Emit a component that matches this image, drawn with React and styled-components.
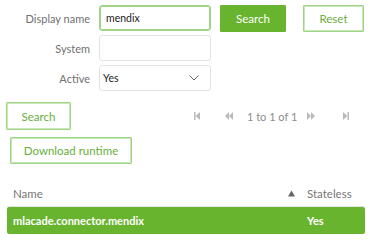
import React from "react";
import styled, { createGlobalStyle } from "styled-components";

const Global = createGlobalStyle`
  html, body { margin: 0; padding: 0; background: #fff; }
  body { font-family: Lato, "Open Sans", sans-serif; font-size: 11px; color: #555; }
  * { box-sizing: border-box; }
`;

const GREEN = "#68b42e";
const LIGHT_GREEN = "#9fd484";

const Page = styled.div`
  width: 370px;
  height: 242px;
  padding-top: 5px;
  display: flex;
  flex-direction: column;
  overflow: hidden;
`;

const Form = styled.div`
  display: grid;
  grid-template-columns: 90px 112px auto auto;
  grid-auto-rows: 26px;
  column-gap: 9px;
  row-gap: 4px;
  align-items: center;
`;

const Label = styled.label`
  text-align: right;
  color: #707070;
  font-size: 11px;
`;

const Input = styled.input`
  width: 112px;
  height: 26px;
  border: 1px solid ${(p) => (p.$focus ? LIGHT_GREEN : "#e2e2e2")};
  box-shadow: ${(p) => (p.$focus ? `inset 0 0 0 1px ${LIGHT_GREEN}` : "none")};
  border-radius: 3px;
  padding: 0 6px;
  font-family: inherit;
  font-size: 10.5px;
  color: #222;
  outline: none;
`;

const SelectBox = styled.div`
  width: 112px;
  height: 26px;
  border: 1px solid #e2e2e2;
  border-radius: 3px;
  padding: 0 11px 0 3px;
  display: flex;
  align-items: center;
  justify-content: space-between;
  font-size: 10.5px;
  color: #222;
`;

const Button = styled.button`
  height: ${(p) => p.$h || 27}px;
  width: ${(p) => p.$w}px;
  font-family: inherit;
  font-size: 11.5px;
  border-radius: 1px;
  border: 1px solid ${(p) => (p.$primary ? GREEN : LIGHT_GREEN)};
  background: ${(p) => (p.$primary ? GREEN : "#fff")};
  color: ${(p) => (p.$primary ? "#fff" : "#6aae3c")};
  box-shadow: ${(p) => (p.$primary ? "none" : `inset 0 0 0 1px #c9e8b8`)};
  padding: 0;
  cursor: pointer;
  margin-left: ${(p) => p.$ml || 0}px;
`;

const ToolRow = styled.div`
  display: flex;
  align-items: center;
  margin-top: 11px;
  padding-left: 6px;
`;

const Pager = styled.div`
  display: flex;
  align-items: center;
  margin-left: 122px;
  color: #8c8c8c;
  font-size: 11px;
`;

const PagerIcon = styled.span`
  display: inline-flex;
  width: 8px;
  justify-content: center;
  margin-right: ${(p) => p.$mr}px;
  margin-left: ${(p) => p.$ml || 0}px;
`;

const DownloadRow = styled.div`
  padding-left: 10px;
  margin-top: 7px;
`;

const Table = styled.div`
  margin: 16px 5px 0 7px;
`;

const HeadRow = styled.div`
  display: grid;
  grid-template-columns: 1fr 64px;
  height: 27px;
  align-items: center;
  border-bottom: 1px solid #e6e6e6;
  color: #777;
  font-size: 11.5px;
`;

const HeadCell = styled.div`
  padding-left: 6px;
  display: flex;
  align-items: center;
  justify-content: space-between;
`;

const SortIcon = styled.span`
  display: inline-flex;
  margin-right: 6px;
`;

const DataRow = styled.div`
  display: grid;
  grid-template-columns: 1fr 64px;
  height: 27px;
  align-items: center;
  background: ${GREEN};
  color: #fff;
  font-weight: 700;
  font-size: 11px;
  border-radius: 2px;
`;

const Cell = styled.div`
  padding-left: 6px;
`;

const First = () => (
  <svg width="6" height="8" viewBox="0 0 6 8"><rect x="0" y="0" width="1.5" height="8" fill="#bbb" /><path d="M6 0 L1.5 4 L6 8 Z" fill="#bbb" /></svg>
);
const Prev = () => (
  <svg width="8" height="8" viewBox="0 0 8 8"><path d="M4 0 L0 4 L4 8 Z M8 0 L4 4 L8 8 Z" fill="#bbb" /></svg>
);
const Next = () => (
  <svg width="8" height="8" viewBox="0 0 8 8"><path d="M0 0 L4 4 L0 8 Z M4 0 L8 4 L4 8 Z" fill="#bbb" /></svg>
);
const Last = () => (
  <svg width="6" height="8" viewBox="0 0 6 8"><path d="M0 0 L4.5 4 L0 8 Z" fill="#bbb" /><rect x="4.5" y="0" width="1.5" height="8" fill="#bbb" /></svg>
);
const Chevron = () => (
  <svg width="10" height="6" viewBox="0 0 10 6"><path d="M0.5 0.5 L5 5 L9.5 0.5" stroke="#666" strokeWidth="1" fill="none" /></svg>
);
const Triangle = () => (
  <svg width="7" height="7" viewBox="0 0 7 7"><path d="M3.5 0.5 L7 6.5 L0 6.5 Z" fill="#666" /></svg>
);

export default function App() {
  return (
    <Page>
      <Global />
      <Form>
        <Label>Display name</Label>
        <Input $focus defaultValue="mendix" />
        <Button $primary $w={66}>Search</Button>
        <Button $w={61} $ml={2}>Reset</Button>
        <Label>System</Label>
        <Input />
        <span />
        <span />
        <Label>Active</Label>
        <SelectBox>
          <span>Yes</span>
          <Chevron />
        </SelectBox>
      </Form>
      <ToolRow>
        <Button $w={65} $h={28}>Search</Button>
        <Pager>
          <PagerIcon $mr={24}><First /></PagerIcon>
          <PagerIcon $mr={14}><Prev /></PagerIcon>
          <span>1 to 1 of 1</span>
          <PagerIcon $mr={27} $ml={10}><Next /></PagerIcon>
          <PagerIcon $mr={0}><Last /></PagerIcon>
        </Pager>
      </ToolRow>
      <DownloadRow>
        <Button $w={122}>Download runtime</Button>
      </DownloadRow>
      <Table>
        <HeadRow>
          <HeadCell>Name<SortIcon><Triangle /></SortIcon></HeadCell>
          <Cell>Stateless</Cell>
        </HeadRow>
        <DataRow>
          <Cell>mlacade.connector.mendix</Cell>
          <Cell>Yes</Cell>
        </DataRow>
      </Table>
    </Page>
  );
}
